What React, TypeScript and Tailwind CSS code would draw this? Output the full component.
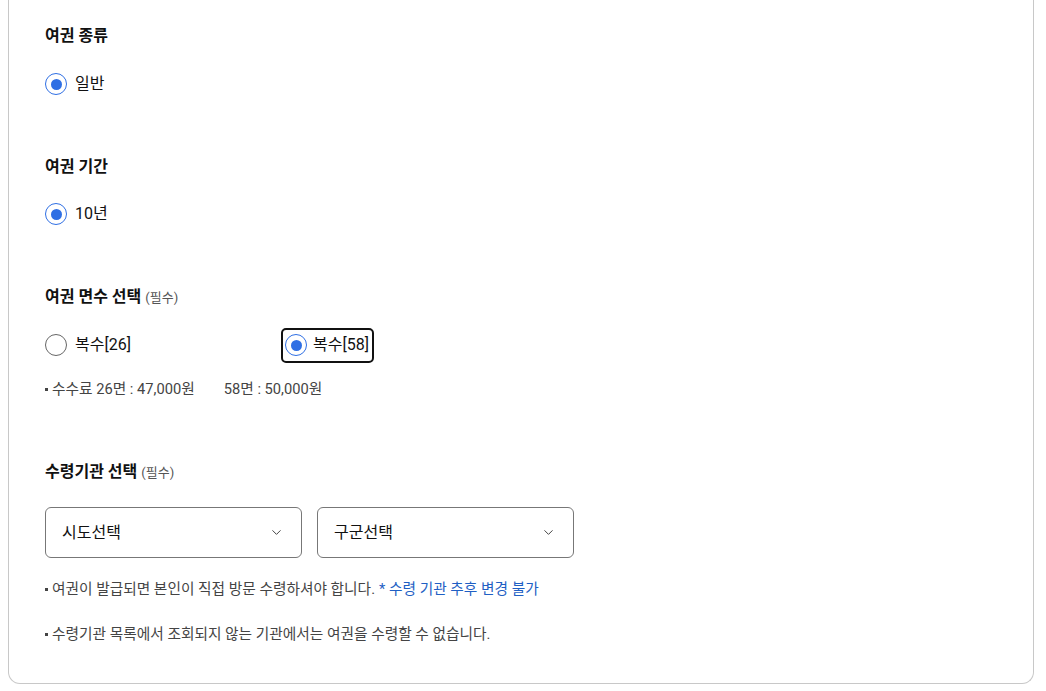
import { ChevronDown } from 'lucide-react'

function Radio({ checked }: { checked?: boolean }) {
  return checked ? (
    <span className="w-[22px] h-[22px] rounded-full border-[1.5px] border-[#2f6fe4] flex items-center justify-center shrink-0">
      <span className="w-[11px] h-[11px] rounded-full bg-[#2f6fe4]" />
    </span>
  ) : (
    <span className="w-[22px] h-[22px] rounded-full border border-[#666] bg-white shrink-0" />
  )
}

function Heading({ title, required }: { title: string; required?: boolean }) {
  return (
    <h3 className="h-6 leading-6 text-[16px] font-bold text-[#111]">
      {title}
      {required && <span className="ml-1 text-[13px] font-normal text-[#555]">(필수)</span>}
    </h3>
  )
}

function Note({ children }: { children: React.ReactNode }) {
  return (
    <p className="flex items-center h-5 text-[14.7px] text-[#444]">
      <span className="w-[3px] h-[3px] bg-[#444] mr-[4px]" />
      {children}
    </p>
  )
}

function SelectBox({ label }: { label: string }) {
  return (
    <button className="w-[257px] h-[51px] pl-4 pr-[17px] flex items-center justify-between border border-[#777] rounded-md bg-white text-[16px] text-[#111]">
      <span>{label}</span>
      <ChevronDown size={15} strokeWidth={1.6} className="text-[#444]" />
    </button>
  )
}

export default function App() {
  return (
    <div className="min-h-screen bg-white" style={{ fontFamily: 'Roboto, "Noto Sans CJK KR", sans-serif' }}>
      <div className="mx-[8px] w-[1026px] border-x border-b border-[#c8c8c8] rounded-b-xl pl-9 pt-6 pb-[39px]">
        <Heading title="여권 종류" />
        <div className="mt-6 flex items-center gap-2 h-6 text-[16px] text-[#111]">
          <Radio checked />
          <span>일반</span>
        </div>

        <div className="mt-[59px]">
          <Heading title="여권 기간" />
        </div>
        <div className="mt-[23px] flex items-center gap-2 h-6 text-[16px] text-[#111]">
          <Radio checked />
          <span>10년</span>
        </div>

        <div className="mt-[59px]">
          <Heading title="여권 면수 선택" required />
        </div>
        <div className="mt-6 flex items-center h-6 text-[16px] text-[#111]">
          <label className="w-[238px] flex items-center gap-2">
            <Radio />
            <span>복수[26]</span>
          </label>
          <label className="flex items-center gap-[6px] h-[31px] pl-[2px] pr-[3px] outline-2 outline-[#111] rounded-[3px]">
            <Radio checked />
            <span>복수[58]</span>
          </label>
        </div>
        <div className="mt-[22px]">
          <Note>
            수수료 26면 : 47,000원<span className="ml-[29px]">58면 : 50,000원</span>
          </Note>
        </div>

        <div className="mt-[61px]">
          <Heading title="수령기관 선택" required />
        </div>
        <div className="mt-[23px] flex gap-[15px]">
          <SelectBox label="시도선택" />
          <SelectBox label="구군선택" />
        </div>
        <div className="mt-[21px]">
          <Note>
            여권이 발급되면 본인이 직접 방문 수령하셔야 합니다.
            <span className="ml-1 text-[#1f5fc4]">* 수령 기관 추후 변경 불가</span>
          </Note>
        </div>
        <div className="mt-[25px]">
          <Note>수령기관 목록에서 조회되지 않는 기관에서는 여권을 수령할 수 없습니다.</Note>
        </div>
      </div>
    </div>
  )
}
